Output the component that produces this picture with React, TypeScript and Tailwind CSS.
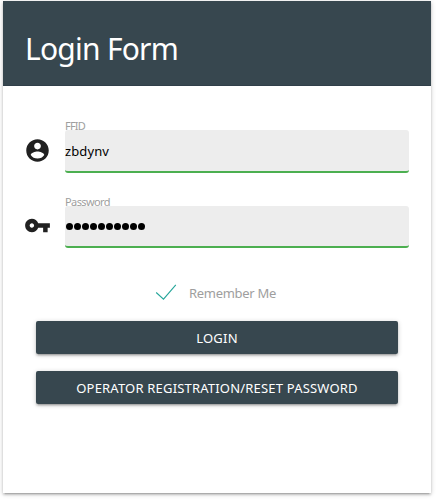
import React from "react";

const RAISED =
  "shadow-[0_2px_2px_0_rgba(0,0,0,0.14),0_3px_1px_-2px_rgba(0,0,0,0.12),0_1px_5px_0_rgba(0,0,0,0.2)]";

function AccountIcon() {
  return (
    <svg viewBox="0 0 24 24" className="size-[27px]" fill="#212121">
      <path d="M12 2C6.48 2 2 6.48 2 12s4.48 10 10 10 10-4.48 10-10S17.52 2 12 2zm0 3c1.66 0 3 1.34 3 3s-1.34 3-3 3-3-1.34-3-3 1.34-3 3-3zm0 14.2c-2.5 0-4.71-1.28-6-3.22.03-1.99 4-3.08 6-3.08 1.99 0 5.97 1.09 6 3.08-1.29 1.94-3.5 3.22-6 3.22z" />
    </svg>
  );
}

function KeyIcon() {
  return (
    <svg viewBox="0 0 24 24" className="size-[27px]" fill="#212121">
      <path d="M12.65 10C11.83 7.67 9.61 6 7 6c-3.31 0-6 2.69-6 6s2.69 6 6 6c2.61 0 4.83-1.67 5.65-4H17v4h4v-4h2v-4H12.65zM7 14c-1.1 0-2-.9-2-2s.9-2 2-2 2 .9 2 2-.9 2-2 2z" />
    </svg>
  );
}

export default function App() {
  return (
    <div className="h-[501px] w-[438px] overflow-hidden bg-white pl-[3px] pt-px font-['Noto_Sans',sans-serif]">
      <main className={`flex h-[492px] w-[428px] flex-col bg-white ${RAISED}`}>
        <header className="h-[85px] border-b border-[#303f49] bg-[#37474f] pl-[22px] pt-[27px]">
          <h1 className="text-[30px] font-normal leading-[42px] tracking-[-0.75px] text-white">Login Form</h1>
        </header>

        <div className="mt-[34px] flex h-[53px] pl-[21px]">
          <div className="w-[41px] pt-[17px]"><AccountIcon /></div>
          <label className="flex w-[344px] flex-col">
            <span className="h-[10px] text-[11px] leading-[12px] tracking-[-0.8px] text-[#9e9e9e]">FFID</span>
            <span className="flex h-[43px] items-center rounded-[3px] border-b-2 border-[#4caf50] bg-[#ededed] pt-[2px] text-[13px] tracking-[0.1px] text-black">
              zbdynv
            </span>
          </label>
        </div>

        <div className="mt-[23px] flex h-[52px] pl-[21px]">
          <div className="w-[41px] pt-[16px]"><KeyIcon /></div>
          <label className="flex w-[344px] flex-col">
            <span className="h-[10px] text-[11px] leading-[12px] tracking-[-0.6px] text-[#9e9e9e]">Password</span>
            <span className="flex h-[42px] items-center gap-px rounded-[3px] border-b-2 border-[#4caf50] bg-[#ededed] pl-[0.5px] pt-[1.5px]">
              {Array.from({ length: 10 }, (_, i) => (
                <i key={i} className="size-[7px] rounded-full bg-black" />
              ))}
            </span>
          </label>
        </div>

        <div className="mt-[35px] flex h-[20px] items-center pl-[152px]">
          <svg viewBox="0 0 22 18" className="h-[18px] w-[22px]" fill="none" stroke="#26a69a" strokeWidth="1.1">
            <path d="M1.2 8.5 8.5 15.2 20.8 0.8" />
          </svg>
          <span className="ml-[12px] text-[13px] leading-[20px] tracking-[-0.3px] text-[#9e9e9e]">Remember Me</span>
        </div>

        <button className={`ml-[33px] mt-[18px] h-[33px] w-[362px] rounded-[2px] bg-[#37474f] pt-[2px] text-[13px] tracking-[0.2px] text-white ${RAISED}`}>
          LOGIN
        </button>
        <button className={`ml-[33px] mt-[17px] h-[33px] w-[362px] rounded-[2px] bg-[#37474f] pt-[2px] text-[13px] tracking-[0.19px] text-white ${RAISED}`}>
          OPERATOR REGISTRATION/RESET PASSWORD
        </button>
      </main>
    </div>
  );
}
